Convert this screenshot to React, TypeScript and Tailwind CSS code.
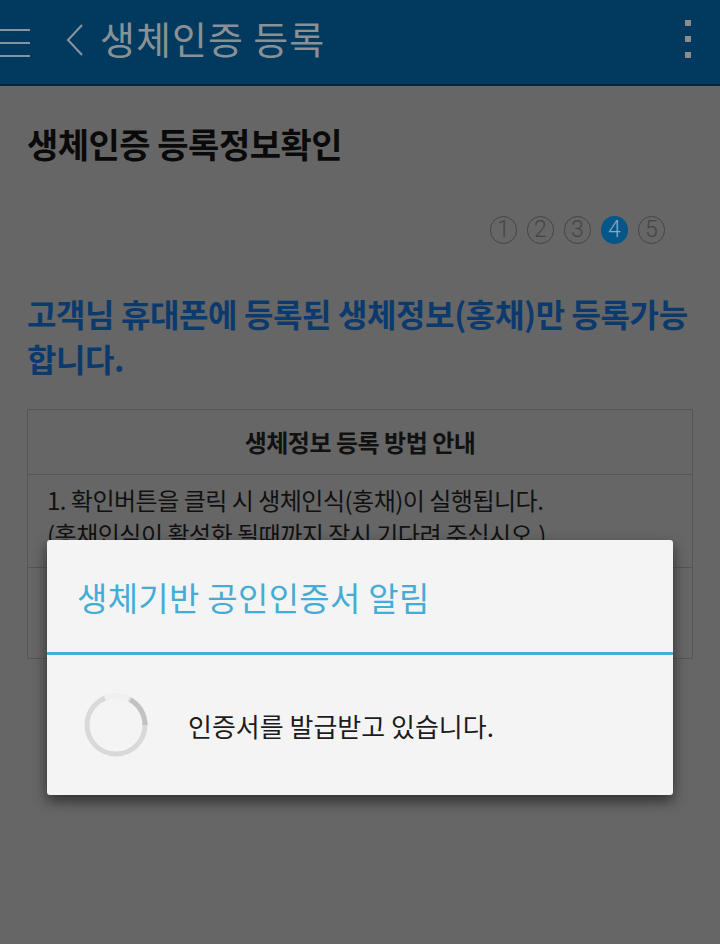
import React from 'react';

const font = { fontFamily: '"Noto Sans CJK KR", "Noto Sans", sans-serif' };

const steps = [1, 2, 3, 4, 5];

function Spinner() {
  return (
    <svg width="66" height="66" viewBox="0 0 66 66" className="shrink-0">
      <circle cx="33" cy="33" r="29" fill="none" stroke="#d9d9d9" strokeWidth="5" />
      {/* darker arc on the upper right */}
      <path d="M47.5 7.9 A29 29 0 0 1 62 33" fill="none" stroke="#c2c2c2" strokeWidth="5" />
      {/* faded tail near the top */}
      <path d="M22 6.2 A29 29 0 0 1 46 7.1" fill="none" stroke="#f0f0f0" strokeWidth="6" />
    </svg>
  );
}

export default function App() {
  return (
    <div className="relative w-[720px] h-[944px] overflow-hidden bg-[#666666]" style={font}>
      {/* App bar */}
      <div className="h-[86px] bg-[#013a5e] border-b-2 border-[#0c2436] flex items-center">
        <div className="w-[30px] flex flex-col gap-[11px] pt-[2px]">
          <div className="h-[2px] bg-[#8594a1]"></div>
          <div className="h-[2px] bg-[#8594a1]"></div>
          <div className="h-[2px] bg-[#8594a1]"></div>
        </div>
        <svg width="20" height="34" viewBox="0 0 20 34" className="ml-[35px] mt-[-4px]">
          <path d="M17 2 L3 17 L17 32" fill="none" stroke="#8a949c" strokeWidth="2" />
        </svg>
        <div className="ml-[15px] text-[38px] tracking-[1px] leading-none text-[#8a9196] mt-[-8px]">생체인증 등록</div>
        <div className="ml-auto mr-[29px] flex flex-col gap-[10px] mt-[-6px]">
          <div className="w-[6px] h-[6px] bg-[#8c8c8c]"></div>
          <div className="w-[6px] h-[6px] bg-[#8c8c8c]"></div>
          <div className="w-[6px] h-[6px] bg-[#8c8c8c]"></div>
        </div>
      </div>

      {/* Page content (dimmed) */}
      <div className="px-[27px]">
        <h1 className="mt-[33px] text-[34px] leading-[50px] font-bold tracking-[-0.5px] text-[#0a0a0a]">
          생체인증 등록정보확인
        </h1>

        <div className="mt-[47px] flex justify-end gap-[10px] pr-[28px]">
          {steps.map((n) =>
            n === 4 ? (
              <div
                key={n}
                className="w-[27px] h-[28px] rounded-full bg-[#02568a] flex items-center justify-center text-[23px] font-light text-[#8fa6b8]"
                style={{ fontFamily: 'Roboto, sans-serif' }}
              >
                {n}
              </div>
            ) : (
              <div
                key={n}
                className="w-[27px] h-[28px] rounded-full border-[1.5px] border-[#444444] flex items-center justify-center text-[23px] font-light text-[#444444]"
                style={{ fontFamily: 'Roboto, sans-serif' }}
              >
                {n}
              </div>
            )
          )}
        </div>

        <p className="mt-[47px] text-[32px] leading-[45px] font-bold tracking-[-0.4px] text-[#0c3a6c] whitespace-nowrap">
          고객님 휴대폰에 등록된 생체정보(홍채)만 등록가능
          <br />
          합니다.
        </p>

        <div className="mt-[28px] border border-[#555555]">
          <div className="h-[65px] flex items-center justify-center text-[24px] font-bold tracking-[-0.5px] text-[#111111] border-b border-[#555555]">
            생체정보 등록 방법 안내
          </div>
          <div className="h-[93px] px-[19px] pt-[8px] text-[24px] leading-[34px] tracking-[-0.5px] text-[#111111] border-b border-[#555555]">
            <div>1. 확인버튼을 클릭 시 생체인식(홍채)이 실행됩니다.</div>
            <div>(홍채인식이 활성화 될때까지 잠시 기다려 주십시오.)</div>
          </div>
          <div className="h-[90px]"></div>
        </div>
      </div>

      {/* Progress dialog */}
      <div className="absolute left-[47px] top-[540px] w-[626px] bg-[#f4f4f4] rounded-[3px] shadow-[0_6px_14px_rgba(0,0,0,0.55)]">
        <div className="h-[112px] flex items-center pl-[30px] text-[33px] tracking-[0.3px] text-[#45acd6] pt-[4px]">
          생체기반 공인인증서 알림
        </div>
        <div className="h-[3px] bg-[#46afd8]"></div>
        <div className="h-[140px] flex items-center pl-[36px]">
          <Spinner />
          <div className="ml-[39px] text-[26px] text-[#1c1c1c]">인증서를 발급받고 있습니다.</div>
        </div>
      </div>
    </div>
  );
}
